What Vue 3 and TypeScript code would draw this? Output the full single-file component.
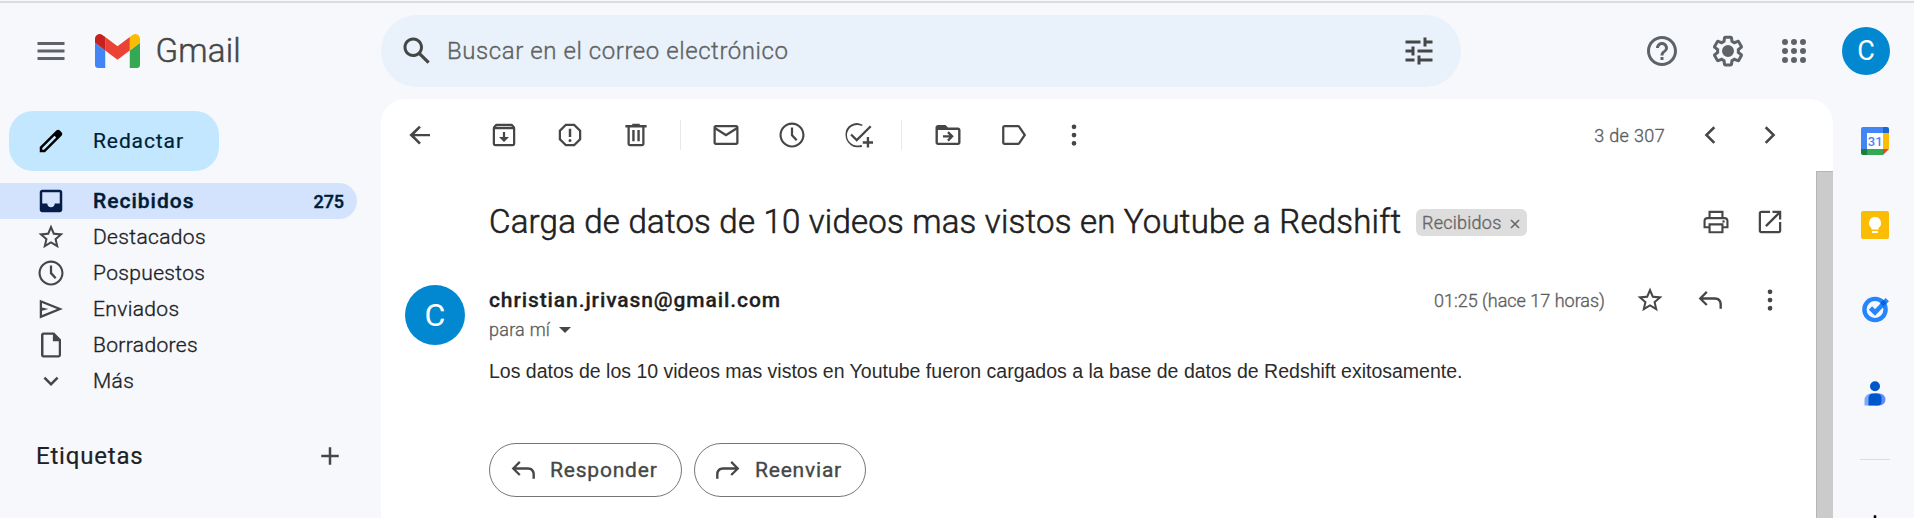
<script setup lang="ts">
import { defineComponent, h } from 'vue'

// Monochrome icons on a 24-unit grid.
const paths: Record<string, string> = {
  menu: 'M3 18h18v-2H3v2zm0-5h18v-2H3v2zm0-7v2h18V6H3z',
  search: 'M20.49 19l-5.73-5.73C15.53 12.2 16 10.91 16 9.5 16 5.91 13.09 3 9.5 3S3 5.91 3 9.5 5.91 16 9.5 16c1.41 0 2.7-.47 3.77-1.24L19 20.49 20.49 19zM5 9.5C5 7.01 7.01 5 9.5 5S14 7.01 14 9.5 11.99 14 9.5 14 5 11.99 5 9.5z',
  tune: 'M3 17v2h6v-2H3zM3 5v2h10V5H3zm10 16v-2h8v-2h-8v-2h-2v6h2zM7 9v2H3v2h4v2h2V9H7zm14 4v-2H11v2h10zm-6-4h2V7h4V5h-4V3h-2v6z',
  help: 'M11 18h2v-2h-2v2zm1-16C6.48 2 2 6.48 2 12s4.48 10 10 10 10-4.48 10-10S17.52 2 12 2zm0 18c-4.41 0-8-3.59-8-8s3.59-8 8-8 8 3.59 8 8-3.59 8-8 8zm0-14c-2.21 0-4 1.79-4 4h2c0-1.1.9-2 2-2s2 .9 2 2c0 2-3 1.75-3 5h2c0-2.25 3-2.5 3-5 0-2.21-1.79-4-4-4z',
  settings: 'M13.85 22.25h-3.7c-.74 0-1.36-.54-1.45-1.27l-.27-1.89c-.27-.14-.53-.29-.79-.46l-1.8.72c-.7.26-1.47-.03-1.81-.65L2.2 15.53c-.35-.66-.2-1.44.36-1.88l1.53-1.19c-.01-.15-.02-.3-.02-.46 0-.15.01-.31.02-.46l-1.52-1.19c-.59-.45-.74-1.26-.37-1.88l1.85-3.19c.34-.62 1.11-.9 1.79-.63l1.81.73c.26-.17.52-.32.78-.46l.27-1.91c.09-.7.71-1.25 1.44-1.25h3.7c.74 0 1.36.54 1.45 1.27l.27 1.89c.27.14.53.29.79.46l1.8-.72c.71-.26 1.48.03 1.82.65l1.84 3.18c.36.66.2 1.44-.36 1.88l-1.52 1.19c.01.15.02.3.02.46s-.01.31-.02.46l1.52 1.19c.56.45.72 1.23.37 1.86l-1.86 3.22c-.34.62-1.11.9-1.8.63l-1.8-.72c-.26.17-.52.32-.78.46l-.27 1.91c-.1.68-.72 1.22-1.46 1.22zm-3.23-2h2.76l.37-2.55.53-.22c.44-.18.88-.44 1.34-.78l.45-.34 2.38.96 1.38-2.4-2.03-1.58.07-.56c.03-.26.06-.51.06-.78s-.03-.53-.06-.78l-.07-.56 2.03-1.58-1.39-2.4-2.39.96-.45-.35c-.42-.32-.87-.58-1.33-.77l-.52-.22-.37-2.55h-2.76l-.37 2.55-.53.21c-.44.19-.88.44-1.34.79l-.45.33-2.38-.95-1.39 2.39 2.03 1.58-.07.56a7 7 0 0 0-.06.79c0 .26.02.53.06.78l.07.56-2.03 1.58 1.38 2.4 2.39-.96.45.35c.43.33.86.58 1.33.77l.53.22.38 2.55zM12 8a4 4 0 1 0 0 8 4 4 0 0 0 0-8z',
  apps: 'M6 8a2 2 0 1 0 0-4 2 2 0 0 0 0 4zm6 0a2 2 0 1 0 0-4 2 2 0 0 0 0 4zm6 0a2 2 0 1 0 0-4 2 2 0 0 0 0 4zM6 14a2 2 0 1 0 0-4 2 2 0 0 0 0 4zm6 0a2 2 0 1 0 0-4 2 2 0 0 0 0 4zm6 0a2 2 0 1 0 0-4 2 2 0 0 0 0 4zM6 20a2 2 0 1 0 0-4 2 2 0 0 0 0 4zm6 0a2 2 0 1 0 0-4 2 2 0 0 0 0 4zm6 0a2 2 0 1 0 0-4 2 2 0 0 0 0 4z',
  pencil: 'M20.41 4.94l-1.35-1.35c-.78-.78-2.05-.78-2.83 0L3 16.82V21h4.18L20.41 7.77c.79-.78.79-2.05 0-2.83zM6.41 19.06L5 19v-1.36l9.82-9.82 1.41 1.41-9.82 9.83z',
  inbox: 'M19 3H5c-1.1 0-2 .9-2 2v14c0 1.1.9 2 2 2h14c1.1 0 2-.9 2-2V5c0-1.1-.9-2-2-2zm0 11h-4c0 1.66-1.35 3-3 3s-3-1.34-3-3H4.99V5H19v9z',
  star: 'M22 9.24l-7.19-.62L12 2 9.19 8.63 2 9.24l5.46 4.73L5.82 21 12 17.27 18.18 21l-1.63-7.03L22 9.24zM12 15.4l-3.76 2.27 1-4.28-3.32-2.88 4.38-.38L12 6.1l1.71 4.04 4.38.38-3.32 2.88 1 4.28L12 15.4z',
  clock: 'M12 2C6.5 2 2 6.5 2 12s4.500 10 10 10 10-4.500 10-10S17.500 2 12 2zm0 18.300c-4.600 0-8.300-3.700-8.300-8.300S7.400 3.700 12 3.700s8.300 3.700 8.300 8.300-3.700 8.300-8.300 8.300zM12.900 6h-1.800v6.500l4 4.300 1.300-1.200-3.500-3.900V6z',
  send: 'M3 4.500v15L21.500 12 3 4.500zm1.800 2.700L16.800 12l-12 4.800v-3.500L10 12l-5.200-1.300V7.200z',
  file: 'M14.500 2H6c-1.100 0-2 .9-2 2v16c0 1.100.9 2 2 2h12c1.100 0 2-.9 2-2V7.500L14.500 2zM6 20.200V3.800h7.500V9h4.700v11.200H6z',
  chevDown: 'M7.410 8.590L12 13.170l4.590-4.580L18 10l-6 6-6-6z',
  plus: 'M19 13h-6v6h-2v-6H5v-2h6V5h2v6h6v2z',
  back: 'M20 11.100H7.600l5.100-5.200L11.300 4.500 3.500 12l7.800 7.500 1.400-1.400-5.100-5.200H20z',
  archive: 'M20.540 5.230l-1.390-1.680C18.880 3.210 18.470 3 18 3H6c-.47 0-.88.21-1.160.55L3.460 5.230C3.170 5.570 3 6.020 3 6.500V19c0 1.100.9 2 2 2h14c1.100 0 2-.9 2-2V6.500c0-.48-.17-.93-.46-1.270zM6.240 4.700h11.520l.6.700H5.640l.6-.7zM4.800 19.200V7.300h14.400v11.900H4.800zM11.100 9.500v4H8l4 4 4-4h-3.100v-4z',
  spam: 'M15.730 3H8.270L3 8.270v7.460L8.270 21h7.460L21 15.730V8.270L15.730 3zM19.200 15l-4.200 4.200H9L4.800 15V9L9 4.800h6L19.200 9v6zM11 7h2v6.500h-2zM12 15.200a1.200 1.200 0 1 1 0 2.400 1.200 1.200 0 0 1 0-2.400z',
  trash: 'M15 4V3H9v1H3.500v2h1.700v13c0 1.100.9 2 2 2h9.600c1.100 0 2-.9 2-2V6h1.700V4H15zm2 15.200H7V6h10v13.200zM9 8h1.900v9H9zm4.100 0H15v9h-1.900z',
  mail: 'M20.200 4H3.800C2.800 4 2 4.800 2 5.800v12.400c0 1 .8 1.800 1.800 1.800h16.400c1 0 1.800-.8 1.800-1.800V5.800c0-1-.8-1.800-1.800-1.800zm0 14.200H3.800V7.900l8.200 5.200 8.200-5.200v10.300zM12 11L3.800 5.800h16.400L12 11z',
  task: 'M22.800 5.600L11 17.400l-5.200-5.200 1.300-1.300 3.900 3.900L21.500 4.300zM15.500 3.800A9 9 0 0 0 2 12a10 10 0 0 0 13.400 9.300l-.7-1.600A8.200 8.200 0 1 1 14.900 4.800l1.300-1.200zM19 13.500h1.900V17H24v1.900h-3.100V22H19v-3.100h-3.200V17H19z',
  move: 'M20 6h-8l-2-2H4c-1.100 0-2 .9-2 2v12c0 1.100.9 2 2 2h16c1.100 0 2-.9 2-2V8c0-1.100-.9-2-2-2zm.1 12.200H3.900V7.900h16.200v10.300zM12.600 9l-1.300 1.300 1.800 1.800H8V14h5.100l-1.800 1.800 1.300 1.300 4-4.100z',
  label: 'M2.500 6v12c0 1.100.9 2 2 2h10.700c.66 0 1.240-.33 1.600-.84L21.700 12l-4.900-7.160C16.440 4.330 15.860 4 15.200 4H4.500c-1.100 0-2 .9-2 2zm1.800-.2h11L19.500 12l-4.200 6.200h-11V5.800z',
  more: 'M12 7.300a1.900 1.900 0 1 0 0-3.800 1.900 1.900 0 0 0 0 3.800zm0 6.600a1.900 1.900 0 1 0 0-3.800 1.900 1.900 0 0 0 0 3.800zm0 6.600a1.900 1.900 0 1 0 0-3.800 1.900 1.900 0 0 0 0 3.800z',
  chevLeft: 'M14.700 5L16.200 6.500 10.600 12l5.600 5.500-1.500 1.500L7.700 12z',
  chevRight: 'M9.300 5L7.800 6.500l5.600 5.500-5.600 5.500L9.300 19l7-7z',
  print: 'M19 8h-1V3H6v5H5c-1.660 0-3 1.340-3 3v6h4v4h12v-4h4v-6c0-1.660-1.340-3-3-3zM7.700 4.700h8.600V8H7.700V4.700zm8.600 14.600H7.700v-4.600h8.600v4.600zm4-4H18V13H6v2.300H3.700V11c0-.7.6-1.300 1.300-1.300h14c.7 0 1.300.6 1.300 1.300v4.300zM18 10.500a1 1 0 1 1 0 2 1 1 0 0 1 0-2z',
  open: 'M19.200 19.200H4.800V4.800H12V3H5c-1.110 0-2 .9-2 2v14c0 1.100.89 2 2 2h14c1.100 0 2-.9 2-2v-7h-1.800v7.200zM14 3v1.800h3.900l-9.830 9.830 1.300 1.300L19.200 6.100V10H21V3h-7z',
  reply: 'M8.800 4.800l1.300 1.300-3.700 3.700H16c3.300 0 5.500 2.200 5.500 5.500V19h-1.900v-3.700c0-2.200-1.400-3.600-3.600-3.600H6.400l3.700 3.600-1.300 1.300L2.900 10.700z',
  forward: 'M15.200 4.800l-1.300 1.300 3.700 3.700H8c-3.300 0-5.500 2.200-5.500 5.500V19h1.900v-3.700c0-2.200 1.400-3.600 3.600-3.600h9.600l-3.700 3.600 1.300 1.300 5.900-5.900z',
}

const Icon = defineComponent({
  props: { name: { type: String, required: true }, size: { type: Number, default: 30 } },
  setup(p) {
    return () => h('svg', { class: 'icon', width: p.size, height: p.size, viewBox: '0 0 24 24', 'aria-hidden': 'true' }, [
      h('path', { d: paths[p.name], fill: 'currentColor', 'fill-rule': 'evenodd' }),
    ])
  },
})

const folders = [
  { icon: 'inbox', label: 'Recibidos', count: 275, active: true },
  { icon: 'star', label: 'Destacados' },
  { icon: 'clock', label: 'Pospuestos' },
  { icon: 'send', label: 'Enviados' },
  { icon: 'file', label: 'Borradores' },
  { icon: 'chevDown', label: 'Más' },
]
</script>

<template>
  <div class="app">
    <header class="topbar">
      <div class="brand">
        <Icon name="menu" :size="36" class="menu" />
        <svg class="logo" width="45" height="34" viewBox="52 42 88 66" preserveAspectRatio="none">
          <path fill="#4285f4" d="M58 108h14V74L52 59v43c0 3.320 2.690 6 6 6" />
          <path fill="#34a853" d="M120 108h14c3.320 0 6-2.690 6-6V59l-20 15" />
          <path fill="#fbbc04" d="M120 48v26l20-15v-8c0-7.420-8.470-11.650-14.400-7.200" />
          <path fill="#ea4335" d="M72 74V48l24 18 24-18v26L96 92" />
          <path fill="#c5221f" d="M52 51v8l20 15V48l-5.600-4.200c-5.940-4.450-14.400-.22-14.400 7.200" />
        </svg>
        <span class="wordmark">Gmail</span>
      </div>
      <div class="search">
        <Icon name="search" :size="36" />
        <span class="placeholder">Buscar en el correo electrónico</span>
        <Icon name="tune" :size="36" class="tune" />
      </div>
      <div class="account">
        <Icon name="help" :size="36" />
        <Icon name="settings" :size="36" />
        <Icon name="apps" :size="36" />
        <span class="avatar small">C</span>
      </div>
    </header>

    <div class="body">
      <aside class="sidebar">
        <button class="compose"><Icon name="pencil" /><span>Redactar</span></button>
        <nav>
          <a v-for="f in folders" :key="f.label" :class="['folder', { active: f.active }]">
            <Icon :name="f.icon" />
            <span class="name">{{ f.label }}</span>
            <span v-if="f.count" class="count">{{ f.count }}</span>
          </a>
        </nav>
        <div class="labels"><span>Etiquetas</span><Icon name="plus" /></div>
      </aside>

      <main class="card">
        <div class="toolbar">
          <Icon name="back" class="back" />
          <div class="group">
            <Icon name="archive" /><Icon name="spam" /><Icon name="trash" />
          </div>
          <i class="sep" />
          <div class="group">
            <Icon name="mail" /><Icon name="clock" /><Icon name="task" />
          </div>
          <i class="sep second" />
          <div class="group">
            <Icon name="move" /><Icon name="label" /><Icon name="more" class="kebab" />
          </div>
          <span class="pager">3 de 307</span>
          <Icon name="chevLeft" />
          <Icon name="chevRight" class="next" />
        </div>

        <div class="scroll">
          <article class="message">
            <div class="subject">
              <h1>Carga de datos de 10 videos mas vistos en Youtube a Redshift</h1>
              <span class="chip">Recibidos
                <svg width="10" height="10" viewBox="0 0 10 10"><path d="M1 1l8 8M9 1L1 9" stroke="#666" stroke-width="1.600" /></svg>
              </span>
              <div class="actions"><Icon name="print" /><Icon name="open" /></div>
            </div>
            <div class="sender">
              <span class="avatar large">C</span>
              <div class="who">
                <strong>christian.jrivasn@gmail.com</strong>
                <span class="to">para mí<i class="caret" /></span>
              </div>
              <div class="meta">
                <time>01:25 (hace 17 horas)</time>
                <Icon name="star" /><Icon name="reply" /><Icon name="more" />
              </div>
            </div>
            <p class="text">Los datos de los 10 videos mas vistos en Youtube fueron cargados a la base de datos de Redshift exitosamente.</p>
            <div class="replies">
              <button><Icon name="reply" /><span>Responder</span></button>
              <button><Icon name="forward" /><span>Reenviar</span></button>
            </div>
          </article>
          <div class="scrollbar" />
        </div>
      </main>

      <aside class="rail">
        <svg width="28" height="28" viewBox="0 0 28 28">
          <path fill="#fff" d="M5 5h18v18H5z" />
          <path fill="#4285f4" d="M2 0h20v6H6v16H0V2a2 2 0 0 1 2-2z" />
          <path fill="#1967d2" d="M22 0h4a2 2 0 0 1 2 2v4h-6z" />
          <path fill="#fbbc04" d="M22 6h6v16h-6z" />
          <path fill="#34a853" d="M6 22h16v6H6z" />
          <path fill="#188038" d="M0 22h6v6H2a2 2 0 0 1-2-2z" />
          <path fill="#ea4335" d="M22 22h6l-6 6z" />
          <text x="14.200" y="18.800" text-anchor="middle" class="day">31</text>
        </svg>
        <svg width="28" height="28" viewBox="0 0 28 28">
          <rect width="28" height="28" rx="2" fill="#fbbc04" />
          <path fill="#fff" d="M14 6a6 6 0 0 1 3.500 10.900V18.500h-7V16.900A6 6 0 0 1 14 6zM11 20h6v2h-6z" />
        </svg>
        <svg width="28" height="28" viewBox="0 0 28 28">
          <circle cx="14" cy="14.500" r="10.600" fill="none" stroke="#2684fc" stroke-width="4.400" />
          <path d="M9.500 13l4.500 4.500L26.300 4.700" fill="none" stroke="#2684fc" stroke-width="4.600" />
          <path d="M19.200 8L22.400 4.800 25.600 8.200 22.400 11.400z" fill="#0066da" />
        </svg>
        <svg width="28" height="28" viewBox="0 0 28 28">
          <path fill="#7baaf7" d="M10 14.500h6v12H3.500V21a6.500 6.500 0 0 1 6.500-6.500z" />
          <path fill="#5e8efb" d="M14 14.500h4.500a6 6 0 0 1 0 12H14z" />
          <path fill="#0057cc" d="M12 14.500h4a4.500 4.500 0 0 1 4.500 4.500v3.500a4 4 0 0 1-4 4h-9V19a4.500 4.500 0 0 1 4.500-4.500z" />
          <circle cx="14" cy="7.200" r="5" fill="#0057cc" />
        </svg>
        <i class="rule" />
        <Icon name="plus" class="add" />
      </aside>
    </div>
  </div>
</template>

<style>
body { margin: 0; background: #f6f8fc; }
</style>

<style scoped>
.app { width: 100%; height: 518px; overflow: hidden; background: #f6f8fc; color: #444746; font-family: Roboto, "Liberation Sans", sans-serif; font-weight: 300; -webkit-text-stroke: 0.350px currentColor; }
.app * { box-sizing: border-box; }
.icon, svg { display: block; flex: none; }
button { font: inherit; cursor: pointer; }

.topbar { display: flex; align-items: center; height: 99px; padding: 3px 24px 0 0; background: linear-gradient(#f6f8fc 1px, #dadcdc 1px 3px, transparent 3px); }
.brand { display: flex; align-items: center; width: 381px; padding-left: 33px; color: #5f6368; }
.logo { margin-left: 25.500px; }
.wordmark { margin-left: 16px; font-size: 33px; color: #444746; line-height: 40px; letter-spacing: 0.200px; -webkit-text-stroke-width: 0.500px; }
.search { display: flex; align-items: center; width: 1080px; height: 72px; padding: 0 24px 1px 18px; border-radius: 36px; background: #e9f1fb; }
.search .placeholder { flex: 1; margin-left: 12px; font-size: 24px; letter-spacing: 0.570px; color: #5f6261; }
.account { display: flex; align-items: center; gap: 30px; margin-left: auto; color: #5f6368; }
.avatar { display: flex; align-items: center; justify-content: center; border-radius: 50%; background: #0288d1; color: #fff; font-weight: 400; -webkit-text-stroke-width: 0; }
.small { width: 48px; height: 48px; font-size: 27px; }
.large { width: 60px; height: 60px; font-size: 32px; flex: none; }

.body { display: flex; height: 419px; }
.sidebar { width: 381px; padding-top: 12px; color: #202124; }
.compose { display: flex; align-items: center; gap: 27px; width: 210px; height: 60px; margin-left: 9px; padding: 0 27px; border: 0; border-radius: 24px; background: #c2e7ff; color: #001d35; font-size: 21px; font-weight: 400; letter-spacing: 0.900px; -webkit-text-stroke-width: 0.200px; }
.compose .icon { color: #000; }
nav { margin-top: 12px; }
.folder { display: flex; align-items: center; gap: 27px; width: 357px; height: 36px; padding: 0 13px 0 36px; border-radius: 0 18px 18px 0; font-size: 21px; letter-spacing: 0.350px; }
.folder .icon { color: #444746; }
.active { background: #d3e3fd; color: #001d35; font-weight: 500; letter-spacing: 1px; -webkit-text-stroke-width: 0.400px; }
.active .icon { color: #041e49; }
.count { margin-left: auto; font-size: 18px; letter-spacing: -0.100px; }
.labels { display: flex; align-items: center; justify-content: space-between; width: 345px; margin-top: 42px; padding-left: 36px; font-size: 24px; height: 30px; font-weight: 400; letter-spacing: 0.800px; -webkit-text-stroke-width: 0.200px; }
.labels .icon { color: #444746; }

.card { display: flex; flex-direction: column; width: 1452px; border-radius: 24px 24px 0 0; background: #fff; }
.toolbar { display: flex; align-items: center; height: 72px; padding: 0 48px 0 24px; }
.back { margin-right: 54px; }
.group { display: flex; gap: 36px; }
.sep { width: 1px; height: 30px; margin: 0 30px 0 29px; background: #e6e8eb; }
.second { margin: 0 31px 0 28px; }
.kebab { margin-left: -6px; }
.pager { margin-left: auto; margin-right: 30px; font-size: 18px; letter-spacing: 0.350px; color: #5e5e5e; }
.next { margin-left: 30px; }
.scroll { display: flex; flex: 1; }
.message { flex: 1; padding: 28px 31px 0 24px; }
.scrollbar { width: 17px; background: #cbcbcb; border-left: 1px solid #b5b5b5; border-top: 1px solid #b5b5b5; }
.subject { display: flex; align-items: center; height: 46px; padding-left: 84px; }
h1 { margin: 0; width: 913px; color: #1f1f1f; font-size: 33px; line-height: 46px; font-weight: 300; letter-spacing: 0.220px; white-space: nowrap; -webkit-text-stroke-width: 0.600px; }
.chip { display: flex; align-items: center; gap: 8px; width: 111px; height: 27px; margin-left: 14px; padding: 0 7px 0 6px; border-radius: 6px; background: #ddd; color: #666; font-size: 18px; letter-spacing: 0.250px; }
.chip svg { margin-top: 4px; }
.actions { display: flex; gap: 24px; margin-left: auto; }
.sender { display: flex; height: 60px; margin-top: 40px; }
.who { display: flex; flex-direction: column; margin-left: 24px; }
.who strong { font-size: 21px; line-height: 30px; font-weight: 500; color: #1f1f1f; letter-spacing: 0.900px; -webkit-text-stroke-width: 0.300px; }
.to { display: flex; align-items: center; gap: 9px; color: #5e5e5e; font-size: 18px; line-height: 30px; letter-spacing: 0.250px; }
.caret { border: 6px solid transparent; border-top-color: #444746; border-bottom: 0; }
.meta { display: flex; gap: 30px; margin-left: auto; height: 30px; align-items: center; color: #444746; }
time { font-size: 18px; letter-spacing: 0; color: #5e5e5e; }
.text { margin: 11px 0 0 84px; font: 19.500px/30px "Liberation Sans", Arial, sans-serif; color: #2b2b2b; -webkit-text-stroke-width: 0; }
.replies { display: flex; gap: 12px; margin: 57px 0 0 84px; }
.replies button { display: flex; align-items: center; gap: 12px; width: 193px; height: 54px; padding: 0 0 0 18px; border: 1px solid #747775; border-radius: 27px; background: #fff; color: #444746; font-size: 21px; font-weight: 400; letter-spacing: 0.800px; }
.replies button + button { width: 172px; }

.rail { display: flex; flex-direction: column; align-items: center; width: 81px; padding: 28px 0 0 3px; gap: 56px; }
.day { font: 500 13px Roboto, sans-serif; fill: #4285f4; -webkit-text-stroke-width: 0; }
.rule { width: 30px; height: 1px; margin-top: -4px; background: #dadce0; flex: none; }
.add { color: #000; margin-top: -7px; }
</style>
